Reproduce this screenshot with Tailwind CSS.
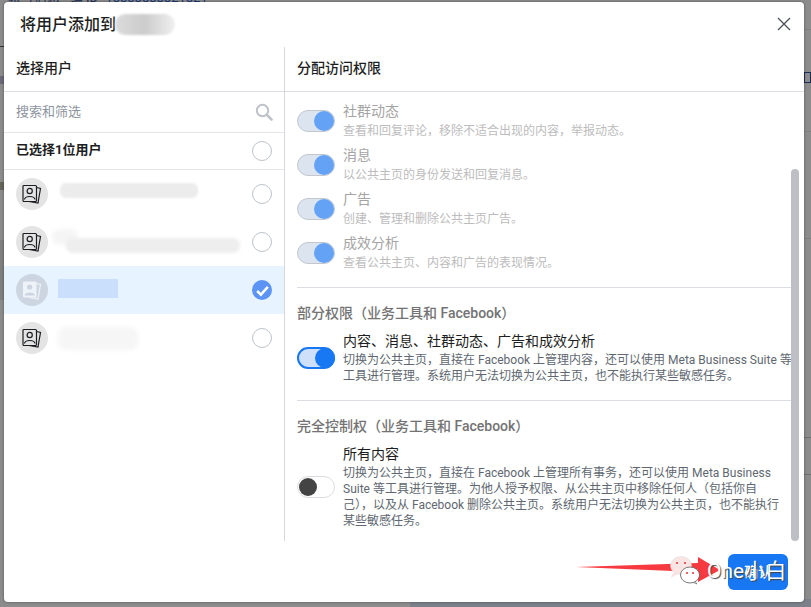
<!DOCTYPE html>
<html lang="zh-CN">
  <head>
    <meta charset="UTF-8" />
    <title>将用户添加到</title>
    <script src="https://cdn.jsdelivr.net/npm/@tailwindcss/browser@4"></script>
  </head>
  <body class="relative h-screen overflow-hidden bg-[#8c8c8c] font-['Roboto','Noto_Sans_CJK_SC',sans-serif] text-[#1c1e21]">
    <!-- dimmed page behind the dialog -->
    <div class="absolute right-0 bottom-0 w-[401px] h-[8px] bg-[#7c8189]"></div>
    <div class="absolute top-[-9px] left-[8px] text-[13px] leading-[14px] text-[#1c2d55] whitespace-nowrap">帐号信息 · 编 ID <span class="text-[#1b3a78] ml-1">18888888821821</span></div>
    <div class="absolute right-0 top-[29px] w-[7px] h-px bg-[#808080]"></div>
    <div class="absolute right-0 top-[131px] w-[7px] h-px bg-[#808080]"></div>
    <div class="absolute right-0 top-[238px] w-[7px] h-px bg-[#808080]"></div>
    <div class="absolute right-0 top-[437px] w-[7px] h-px bg-[#707070]"></div>
    <div class="absolute right-0 top-[474px] w-[7px] h-px bg-[#707070]"></div>
    <div class="absolute right-0 top-[72px] w-[7px] h-[11px] border border-[#1c2d55]"></div>
    <div class="absolute left-0 top-[46px] w-[4px] h-px bg-[#333333]"></div>
    <div class="absolute left-0 top-[76px] w-[4px] h-[8px] bg-[#6a6a78]"></div>
    <div class="absolute left-0 top-[182px] w-[4px] h-[8px] bg-[#66665c]"></div>
    <div class="absolute left-0 top-[240px] w-[4px] h-[60px] bg-[#7f7f7f]"></div>

    <!-- dialog -->
    <div class="absolute left-[4px] top-[2px] w-[800px] h-[600px] bg-white rounded-[4px] shadow-[0_0_3px_rgba(0,0,0,0.4)] flex flex-col">
      <div class="h-[45px] shrink-0 flex items-center justify-between pl-[16px] pr-[12px]">
        <div class="relative text-[16px] font-medium">将用户添加到</div>
        <svg class="w-[14px] h-[14px] mr-[1px] mt-[-2px]" viewBox="0 0 14 14" fill="none" stroke="#4b4f56" stroke-width="1.3">
          <path d="M1 1 L13 13 M13 1 L1 13" />
        </svg>
      </div>

      <div class="flex h-[494px] shrink-0">
        <!-- select users -->
        <div class="w-[281px] shrink-0 border-r border-[#d5d7db]">
          <div class="h-[45px] px-[12px] pb-[2px] flex items-center border-b border-[#dadde1] text-[14px] font-medium">选择用户</div>
          <div class="h-[41px] pl-[12px] pr-[11px] flex items-center justify-between border-b border-[#e4e6e9] text-[13px] text-[#8d949e]">
            <span>搜索和筛选</span>
            <svg class="w-[18px] h-[18px]" viewBox="0 0 18 18" fill="none" stroke="#bec3c9">
              <circle cx="7.5" cy="7.5" r="5.7" stroke-width="2" />
              <path d="M11.8 11.8 L16.5 16.5" stroke-width="2.6" stroke-linecap="round" />
            </svg>
          </div>
          <div class="h-[37px] pl-[12px] pr-[12px] flex items-center justify-between border-b border-[#e4e6e9] text-[13px] font-bold">
            <span class="mt-[-2px]">已选择1位用户</span>
            <span class="w-[20px] h-[20px] rounded-full border border-[#bec3c9]"></span>
          </div>

          <div class="h-[48px] pl-[12px] pr-[12px] flex items-center justify-between">
            <div class="w-[32px] h-[32px] rounded-full bg-[#e4e4e4] flex items-center justify-center">
              <svg class="w-[20px] h-[20px]" viewBox="0 0 20 20" fill="none" stroke="#1c1e21" stroke-width="1.2">
                <rect x="1" y="1.5" width="13.5" height="16" rx="1" />
                <path d="M14.5 3.5 L18.5 4.5 L16 19 L7 17.5" />
                <circle cx="7.7" cy="7" r="2.6" />
                <path d="M2.5 15.5 C3 11.5 12.5 11.5 13 15.5" />
              </svg>
            </div>
            <span class="w-[20px] h-[20px] rounded-full border border-[#bec3c9]"></span>
          </div>
          <div class="h-[48px] pl-[12px] pr-[12px] flex items-center justify-between">
            <div class="w-[32px] h-[32px] rounded-full bg-[#e4e4e4] flex items-center justify-center">
              <svg class="w-[20px] h-[20px]" viewBox="0 0 20 20" fill="none" stroke="#1c1e21" stroke-width="1.2">
                <rect x="1" y="1.5" width="13.5" height="16" rx="1" />
                <path d="M14.5 3.5 L18.5 4.5 L16 19 L7 17.5" />
                <circle cx="7.7" cy="7" r="2.6" />
                <path d="M2.5 15.5 C3 11.5 12.5 11.5 13 15.5" />
              </svg>
            </div>
            <span class="w-[20px] h-[20px] rounded-full border border-[#bec3c9]"></span>
          </div>
          <div class="h-[48px] pl-[12px] pr-[12px] flex items-center justify-between bg-[#e7f3ff]">
            <div class="w-[32px] h-[32px] rounded-full bg-[#ccd5e0] flex items-center justify-center">
              <svg class="w-[20px] h-[20px]" viewBox="0 0 20 20">
                <path d="M14.5 3.5 L18.5 4.5 L16 19 L7 17.5" fill="none" stroke="#f0f4fa" stroke-width="1.2" />
                <rect x="1" y="1.5" width="13.5" height="16" rx="1" fill="#eef3fa" />
                <circle cx="7.7" cy="7" r="2.6" fill="#ccd5e0" />
                <path d="M2.5 15.5 C3 11.5 12.5 11.5 13 15.5 Z" fill="#ccd5e0" />
              </svg>
            </div>
            <span class="w-[20px] h-[20px] rounded-full bg-[#5b94f4] flex items-center justify-center">
              <svg class="w-[15px] h-[15px]" viewBox="0 0 14 14" fill="none" stroke="white" stroke-width="2.4">
                <path d="M2 7.5 L5.5 10.8 L12 3.6" />
              </svg>
            </span>
          </div>
          <div class="h-[48px] pl-[12px] pr-[12px] flex items-center justify-between">
            <div class="w-[32px] h-[32px] rounded-full bg-[#e4e4e4] flex items-center justify-center">
              <svg class="w-[20px] h-[20px]" viewBox="0 0 20 20" fill="none" stroke="#1c1e21" stroke-width="1.2">
                <rect x="1" y="1.5" width="13.5" height="16" rx="1" />
                <path d="M14.5 3.5 L18.5 4.5 L16 19 L7 17.5" />
                <circle cx="7.7" cy="7" r="2.6" />
                <path d="M2.5 15.5 C3 11.5 12.5 11.5 13 15.5" />
              </svg>
            </div>
            <span class="w-[20px] h-[20px] rounded-full border border-[#bec3c9]"></span>
          </div>
        </div>

        <!-- permissions -->
        <div class="flex-1 min-w-0 flex flex-col">
          <div class="h-[45px] shrink-0 px-[12px] pb-[2px] flex items-center border-b border-[#dadde1] text-[14px] font-medium">分配访问权限</div>
          <div class="pl-[12px] pr-[12px] pt-[7px] text-[12px] leading-[16px] whitespace-nowrap text-[#606770]">
            <div class="flex h-[44px] items-center gap-[8px]">
              <div class="w-[38px] h-[22px] rounded-full bg-[#dce4f0] border border-[#c3c7ce] flex justify-end items-center shrink-0"><span class="w-[20px] h-[20px] rounded-full bg-[#64a2f5]"></span></div>
              <div class="mt-[-2px]">
                <div class="text-[14px] leading-[20px] text-[#a4a4a4]">社群动态</div>
                <div class="mt-[2px] text-[#bcbcbc]">查看和回复评论，移除不适合出现的内容，举报动态。</div>
              </div>
            </div>
            <div class="flex h-[44px] items-center gap-[8px]">
              <div class="w-[38px] h-[22px] rounded-full bg-[#dce4f0] border border-[#c3c7ce] flex justify-end items-center shrink-0"><span class="w-[20px] h-[20px] rounded-full bg-[#64a2f5]"></span></div>
              <div class="mt-[-2px]">
                <div class="text-[14px] leading-[20px] text-[#a4a4a4]">消息</div>
                <div class="mt-[2px] text-[#bcbcbc]">以公共主页的身份发送和回复消息。</div>
              </div>
            </div>
            <div class="flex h-[44px] items-center gap-[8px]">
              <div class="w-[38px] h-[22px] rounded-full bg-[#dce4f0] border border-[#c3c7ce] flex justify-end items-center shrink-0"><span class="w-[20px] h-[20px] rounded-full bg-[#64a2f5]"></span></div>
              <div class="mt-[-2px]">
                <div class="text-[14px] leading-[20px] text-[#a4a4a4]">广告</div>
                <div class="mt-[2px] text-[#bcbcbc]">创建、管理和删除公共主页广告。</div>
              </div>
            </div>
            <div class="flex h-[44px] items-center gap-[8px]">
              <div class="w-[38px] h-[22px] rounded-full bg-[#dce4f0] border border-[#c3c7ce] flex justify-end items-center shrink-0"><span class="w-[20px] h-[20px] rounded-full bg-[#64a2f5]"></span></div>
              <div class="mt-[-2px]">
                <div class="text-[14px] leading-[20px] text-[#a4a4a4]">成效分析</div>
                <div class="mt-[2px] text-[#bcbcbc]">查看公共主页、内容和广告的表现情况。</div>
              </div>
            </div>

            <div class="mt-[12px] h-px bg-[#dadde1] w-[494px]"></div>
            <div class="mt-[16px] text-[14px] leading-[18px] font-medium text-[#737373]">部分权限（业务工具和 Facebook）</div>
            <div class="mt-[9px] flex items-center gap-[8px]">
              <div class="w-[38px] h-[22px] rounded-full bg-[#cfe0fb] border-2 border-[#1877f2] flex justify-end items-center shrink-0"><span class="w-[20px] h-[20px] -mr-[2px] rounded-full bg-[#1877f2]"></span></div>
              <div>
                <div class="text-[14px] leading-[20px] text-[#1c1e21]">内容、消息、社群动态、广告和成效分析</div>
                <div class="mt-[1px]">切换为公共主页，直接在 Facebook 上管理内容，还可以使用 Meta Business Suite 等<br />工具进行管理。系统用户无法切换为公共主页，也不能执行某些敏感任务。</div>
              </div>
            </div>

            <div class="mt-[16px] h-px bg-[#dadde1] w-[494px]"></div>
            <div class="mt-[16px] text-[14px] leading-[18px] font-medium text-[#737373]">完全控制权（业务工具和 Facebook）</div>
            <div class="mt-[9px] flex items-center gap-[8px]">
              <div class="w-[38px] h-[22px] rounded-full bg-white border border-[#dadde1] flex items-center shrink-0"><span class="w-[18px] h-[18px] ml-[1px] rounded-full bg-[#444444]"></span></div>
              <div>
                <div class="text-[14px] leading-[20px] text-[#1c1e21]">所有内容</div>
                <div class="mt-[1px]">切换为公共主页，直接在 Facebook 上管理所有事务，还可以使用 Meta Business<br />Suite 等工具进行管理。为他人授予权限、从公共主页中移除任何人（包括你自<br />己），以及从 Facebook 删除公共主页。系统用户无法切换为公共主页，也不能执行<br />某些敏感任务。</div>
              </div>
            </div>
          </div>
        </div>
      </div>

      <div class="flex-1 flex justify-end items-start pt-[13px] pr-[16px]">
        <button class="w-[60px] h-[36px] rounded-[6px] bg-[#1877f2] text-white text-[14px] font-medium">确认</button>
      </div>

      <!-- scrollbar thumb -->
      <div class="absolute left-[787px] top-[167px] w-[8px] h-[372px] rounded-full bg-[#bcc0c4]"></div>
    </div>

    <!-- blurred-out names -->
    <div class="absolute left-[115px] top-[14px] w-[60px] h-[21px] rounded-full bg-linear-to-r from-[#dcdcdc] via-[#cccccc] to-[#f0f0f0] blur-[1px]"></div>
    <div class="absolute left-[60px] top-[183px] w-[138px] h-[15px] rounded-[6px] bg-[#ececec] blur-[1px]"></div>
    <div class="absolute left-[52px] top-[229px] w-[26px] h-[16px] rounded-[8px] bg-[#f5f5f5] blur-[2px]"></div>
    <div class="absolute left-[66px] top-[238px] w-[174px] h-[15px] rounded-[7px] bg-[#eeeeee] blur-[1.5px]"></div>
    <div class="absolute left-[58px] top-[279px] w-[60px] h-[19px] bg-[#c9dffc] blur-[0.5px]"></div>
    <div class="absolute left-[58px] top-[327px] w-[80px] h-[23px] rounded-[8px] bg-[#f6f6f6] blur-[2px]"></div>

    <!-- screenshot annotation and watermark -->
    <svg class="absolute left-[570px] top-[550px] w-[160px] h-[40px]" viewBox="0 0 160 40">
      <path d="M6 17 L128 13 L128 7 L150 20 L128 32 L128 22 Z" fill="#f73a3f" />
      <path d="M103 22 L101 28 L108 24 Z" fill="#fbe4e4" />
      <ellipse cx="111" cy="15.5" rx="10.5" ry="9" fill="#fbe4e4" stroke="#dddddd" stroke-width="0.6" />
      <path d="M124 30 L127 34 L122 32 Z" fill="white" stroke="#555555" stroke-width="0.6" />
      <ellipse cx="120" cy="25" rx="9.5" ry="8" fill="white" stroke="#555555" stroke-width="0.8" />
      <circle cx="107" cy="13" r="1.1" fill="#e04040" />
      <circle cx="115" cy="13" r="1.1" fill="#e04040" />
      <circle cx="117" cy="23" r="1.1" fill="#e04040" />
      <circle cx="123" cy="23" r="1.1" fill="#e04040" />
    </svg>
    <div class="absolute left-[707px] top-[558px] text-[21px] leading-[26px] text-white whitespace-nowrap [text-shadow:1px_1px_1px_#444]">One小白</div>
  </body>
</html>
